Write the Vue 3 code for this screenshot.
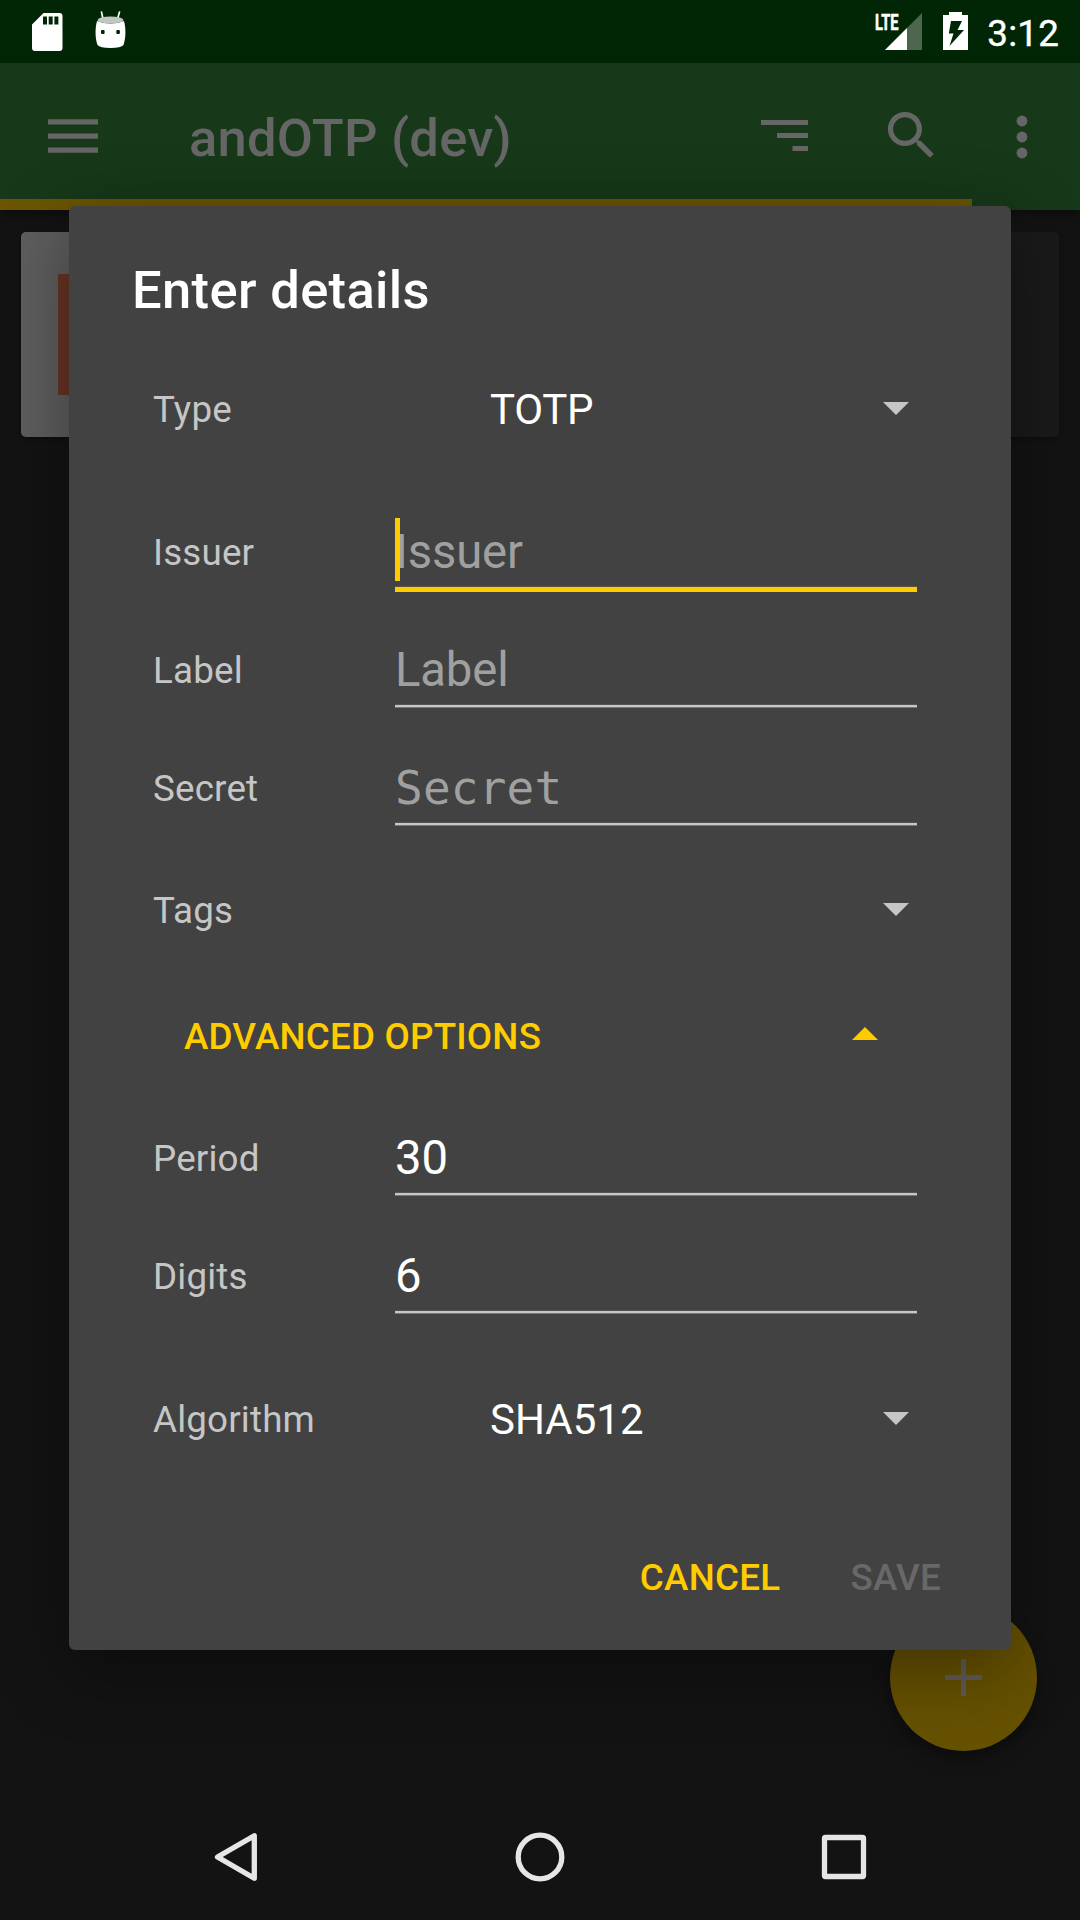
<script setup>
const basicFields = [
  { label: 'Issuer', text: 'Issuer', hint: true, focused: true },
  { label: 'Label', text: 'Label', hint: true },
  { label: 'Secret', text: 'Secret', hint: true, mono: true }
]
const advancedFields = [
  { label: 'Period', text: '30' },
  { label: 'Digits', text: '6' }
]
</script>

<template>
  <div class="screen">
    <header class="status">
      <svg class="sd" width="31" height="38" viewBox="0 0 31 38">
        <path fill="#fff" fill-rule="evenodd" d="M11.500 0H27.500a3 3 0 0 1 3 3V35a3 3 0 0 1-3 3H3a3 3 0 0 1-3-3V11.500ZM11 3.500v8h4v-8ZM16.700 3.500v8h4v-8ZM22.400 3.500v8h4v-8Z" />
      </svg>
      <svg class="droid" width="31" height="37" viewBox="0 0 31 37">
        <path d="M6.500 1 8 8M24.500 1 22.500 8" stroke="#fff" stroke-width="1.700" stroke-linecap="round" />
        <path fill="#fff" d="M2 10Q15.500 15 29 10C31 17 31 27 28.500 34Q26 37 15.500 37 5 37 2.500 34C0 27 0 17 2 10Z" />
        <ellipse cx="15.500" cy="9" rx="12.800" ry="3.600" fill="#bfc8c0" />
        <rect x="6" y="19" width="3.600" height="4" rx="1" fill="#002605" />
        <rect x="21.300" y="19" width="3.600" height="4" rx="1" fill="#002605" />
      </svg>
      <span class="grow"></span>
      <div class="signal">
        <span class="lte">LTE</span>
        <svg width="37" height="37" viewBox="0 0 37 37">
          <path fill="#4d674f" d="M37 0V37H0Z" />
          <path fill="#fff" d="M22 15V37H0Z" />
        </svg>
      </div>
      <svg class="battery" width="25" height="38" viewBox="0 0 25 38">
        <path fill="#fff" d="M6 0H19V3H25V38H0V3H6Z" />
        <path fill="#002605" d="M8 9H19L14.500 18H21L6.500 34 10.500 21.500H5.800Z" />
      </svg>
      <span class="time">3:12</span>
    </header>

    <header class="appbar">
      <svg class="menu" width="50" height="34" viewBox="0 0 50 34" fill="#666">
        <path d="M0 .3H50V5.500H0ZM0 14.500H50V19.700H0ZM0 28.600H50V33.800H0Z" />
      </svg>
      <h1>andOTP (dev)</h1>
      <span class="grow"></span>
      <svg class="sort" width="47" height="31" viewBox="0 0 47 31" fill="#666">
        <path d="M0 0H47V5H0ZM16 13H47V18H16ZM31.500 26H47V31H31.500Z" />
      </svg>
      <svg class="search" width="63" height="63" viewBox="0 0 24 24" fill="#666">
        <path d="M15.500 14h-.79l-.28-.27A6.471 6.471 0 0 0 16 9.500 6.500 6.500 0 1 0 9.500 16c1.610 0 3.090-.59 4.230-1.570l.27.28v.79l5 4.990L20.490 19l-4.990-5zm-6 0C7.010 14 5 11.990 5 9.500S7.010 5 9.500 5 14 7.010 14 9.500 11.990 14 9.500 14z" />
      </svg>
      <svg class="dots" width="12" height="44" viewBox="0 0 12 44" fill="#666">
        <circle cx="6" cy="6" r="5.400" /><circle cx="6" cy="22" r="5.400" /><circle cx="6" cy="38" r="5.400" />
      </svg>
      <div class="progress"></div>
    </header>

    <main class="content">
      <div class="card"><div class="thumb"><div class="tile"></div></div></div>
    </main>

    <nav class="navbar">
      <svg width="50" height="50" viewBox="0 0 50 50"><path d="M44.300 3.700V46.300L7.500 25Z" /></svg>
      <svg width="50" height="50" viewBox="0 0 50 50"><circle cx="25" cy="25" r="21.800" /></svg>
      <svg width="50" height="50" viewBox="0 0 50 50"><rect x="5.500" y="5.500" width="39" height="39" rx="1" /></svg>
    </nav>

    <div class="fab">
      <svg width="37" height="37" viewBox="0 0 37 37"><path fill="#5f5c5a" d="M16 0H21V16H37V21H21V37H16V21H0V16H16Z" /></svg>
    </div>

    <section class="dialog">
      <h2>Enter details</h2>
      <div class="row type">
        <label>Type</label><span class="choice">TOTP</span>
        <svg class="arrow" width="26" height="13" viewBox="0 0 26 13"><path d="M0 0H26L13 13Z" /></svg>
      </div>
      <div v-for="f in basicFields" :key="f.label" class="row">
        <label>{{ f.label }}</label>
        <div class="field" :class="{ hint: f.hint, focused: f.focused, mono: f.mono }">{{ f.text }}<i v-if="f.focused" class="caret"></i></div>
      </div>
      <div class="row tags">
        <label>Tags</label><span class="choice"></span>
        <svg class="arrow" width="26" height="13" viewBox="0 0 26 13"><path d="M0 0H26L13 13Z" /></svg>
      </div>
      <div class="row advanced">
        <span>ADVANCED OPTIONS</span>
        <svg width="26" height="13" viewBox="0 0 26 13"><path d="M0 13H26L13 0Z" /></svg>
      </div>
      <div v-for="f in advancedFields" :key="f.label" class="row">
        <label>{{ f.label }}</label>
        <div class="field">{{ f.text }}</div>
      </div>
      <div class="row algorithm">
        <label>Algorithm</label><span class="choice">SHA512</span>
        <svg class="arrow" width="26" height="13" viewBox="0 0 26 13"><path d="M0 0H26L13 13Z" /></svg>
      </div>
      <footer class="actions">
        <span class="cancel">CANCEL</span><span class="save">SAVE</span>
      </footer>
    </section>
  </div>
</template>

<style>
body { margin: 0; background: #131313; }
</style>

<style scoped>
* { box-sizing: border-box; }
svg { display: block; flex: none; }
h1, h2 { margin: 0; font-weight: 500; font-size: 52.5px; white-space: nowrap; }
.screen {
  position: relative; width: 1080px; height: 1920px; overflow: hidden;
  display: flex; flex-direction: column; background: #131313;
  font-family: Roboto, "Noto Sans", sans-serif; color: #fff;
}
.grow { flex: 1; }
.status { height: 63px; flex: none; display: flex; background: #002605; padding: 0 21px 0 32px; }
.sd { margin-top: 12.500px; }
.droid { margin: 10.500px 0 0 32px; }
.signal { display: flex; margin-top: 12.500px; position: relative; width: 37px; }
.lte {
  position: absolute; left: -9.500px; top: -2px; font-size: 22.500px; line-height: 22px; font-weight: 700;
  transform: scaleX(.65); transform-origin: left; -webkit-text-stroke: .6px #fff;
}
.battery { margin: 12px 0 0 21.500px; }
.time { width: 73px; font-size: 36.75px; line-height: 67px; margin-left: 18px; text-align: right; letter-spacing: .2px; -webkit-text-stroke: .4px #fff; }

.appbar {
  position: relative; z-index: 1; height: 147px; flex: none; display: flex; align-items: flex-start;
  background: #173819; padding-left: 48px; color: #666; box-shadow: 0 4px 10px rgba(0, 0, 0, .35);
}
.menu { margin-top: 55.500px; }
.appbar h1 { margin-left: 91px; line-height: 150px; letter-spacing: .2px; }
.sort { margin-top: 57px; }
.search { margin: 41px 0 0 72px; }
.dots { margin: 51.500px 52px 0 73px; }
.progress { position: absolute; left: 0; bottom: 0; width: 972px; height: 11px; background: #6b5500; }

.content { flex: 1; padding: 22px 21px; }
.card { height: 205px; border-radius: 5px; background: #1a1a1a; overflow: hidden; display: flex; box-shadow: 0 2px 5px rgba(0, 0, 0, .3); }
.thumb { width: 205px; background: #5e5e5e; display: flex; align-items: center; justify-content: center; }
.tile { width: 131px; height: 121px; background: #663524; }

.navbar { height: 126px; flex: none; display: flex; justify-content: space-between; padding: 38px 211px 0 210px; }
.navbar svg { fill: none; stroke: #e6e6e6; stroke-width: 5.300; stroke-linejoin: round; }

.fab {
  position: absolute; left: 890px; top: 1604px; width: 147px; height: 147px; border-radius: 50%;
  background: #665100; display: flex; align-items: center; justify-content: center;
  box-shadow: 0 8px 16px rgba(0, 0, 0, .35);
}

.dialog {
  position: absolute; z-index: 2; left: 69px; top: 206px; width: 942px; height: 1444px; border-radius: 6px;
  background: #424242; padding-top: 43px; display: flex; flex-direction: column;
  box-shadow: 0 18px 70px rgba(0, 0, 0, .38);
}
h2 { height: 95px; line-height: 82px; padding-left: 63px; letter-spacing: .35px; }
.row { height: 118px; flex: none; display: flex; align-items: center; padding: 0 94px 0 84px; }
label { width: 242px; flex: none; font-size: 36.75px; color: #c6c6c6; line-height: 44px; padding-top: 2px; letter-spacing: .18px; }
.type { height: 131px; margin-bottom: 18px; }
.type label { padding-top: 0; }
.tags { height: 126px; }
.algorithm { height: 168px; }
.algorithm .choice { padding-top: 2px; letter-spacing: 0; }
.choice { flex: 1; font-size: 42px; line-height: 50px; padding-left: 95px; letter-spacing: -.3px; }
.arrow { fill: #c6c6c6; margin-right: 8.500px; margin-top: -2px; }
.field {
  position: relative; flex: 1; align-self: flex-start; height: 97px; line-height: 118px; font-size: 47.25px; letter-spacing: -.15px;
  background: linear-gradient(#545454 1px, #c6c6c6 1px 3px, #777 3px) bottom / 100% 4px no-repeat;
}
.hint { color: #a0a0a0; }
.focused { height: 99px; background: linear-gradient(#5a5540 1px, #fc0 1px) bottom / 100% 6px no-repeat; }
.mono { font-family: "DejaVu Sans Mono", monospace; font-size: 46px; letter-spacing: .2px; }
.caret { position: absolute; left: 0; top: 25px; width: 5px; height: 63px; background: #fc0; }
.advanced { height: 126px; justify-content: space-between; padding: 0 133.500px 0 115px; font-size: 36.75px; font-weight: 500; color: #fc0; letter-spacing: .2px; }
.advanced svg { fill: #fc0; margin-top: -5px; }
.actions { display: flex; justify-content: flex-end; gap: 70px; padding: 53px 70px 0 0; font-size: 36.75px; line-height: 44px; font-weight: 500; letter-spacing: .25px; }
.cancel { color: #fc0; }
.save { color: #686868; }
</style>
